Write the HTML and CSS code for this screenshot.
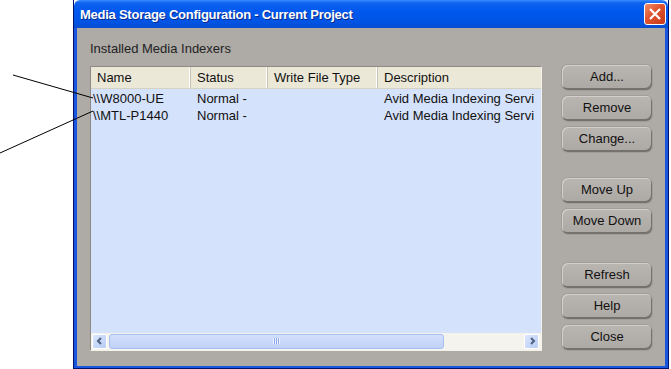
FILE: index.html
```html
<!DOCTYPE html>
<html lang="en">
<head>
  <meta charset="UTF-8">
  <title>Media Storage Configuration</title>
  <link rel="stylesheet" href="styles.css">
</head>
<body>
  <svg class="callouts" width="100" height="160">
    <line x1="13" y1="75" x2="93" y2="98" />
    <line x1="0" y1="153" x2="93" y2="111" />
  </svg>
  <div class="window">
    <div class="titlebar">
      <span class="title">Media Storage Configuration - Current Project</span>
      <div class="close-btn">
        <svg width="14" height="14" viewBox="0 0 14 14"><path d="M2 2 L12 12 M12 2 L2 12" /></svg>
      </div>
    </div>
    <div class="body">
      <div class="main">
        <div class="label">Installed Media Indexers</div>
        <div class="list">
          <div class="list-head">
            <div class="col c-name">Name</div>
            <div class="col c-status">Status</div>
            <div class="col c-type">Write File Type</div>
            <div class="col c-desc">Description</div>
          </div>
          <div class="list-rows">
            <div class="row">
              <div class="cell c-name">\\W8000-UE</div>
              <div class="cell c-status">Normal -</div>
              <div class="cell c-type"></div>
              <div class="cell c-desc">Avid Media Indexing Servi</div>
            </div>
            <div class="row">
              <div class="cell c-name">\\MTL-P1440</div>
              <div class="cell c-status">Normal -</div>
              <div class="cell c-type"></div>
              <div class="cell c-desc">Avid Media Indexing Servi</div>
            </div>
          </div>
          <div class="hscroll">
            <div class="sbtn">
              <svg width="8" height="8" viewBox="0 0 8 8"><path d="M5 1 L2 4 L5 7" /></svg>
            </div>
            <div class="track">
              <div class="thumb"><span class="grip"></span></div>
            </div>
            <div class="sbtn">
              <svg width="8" height="8" viewBox="0 0 8 8"><path d="M3 1 L6 4 L3 7" /></svg>
            </div>
          </div>
        </div>
      </div>
      <div class="buttons">
        <div class="btn">Add...</div>
        <div class="btn">Remove</div>
        <div class="btn">Change...</div>
        <div class="btn gap">Move Up</div>
        <div class="btn">Move Down</div>
        <div class="btn gap2">Refresh</div>
        <div class="btn">Help</div>
        <div class="btn">Close</div>
      </div>
    </div>
  </div>
</body>
</html>
```
FILE: styles.css
```css
html, body {
  margin: 0;
  padding: 0;
  background: #fff;
  font-family: "Liberation Sans", Arial, sans-serif;
  font-size: 13px;
}
body {
  position: relative;
  width: 671px;
  height: 369px;
  overflow: hidden;
}
.callouts {
  position: absolute;
  left: 0;
  top: 0;
  z-index: 2;
}
.callouts line {
  stroke: #000;
  stroke-width: 1;
}
.window {
  margin-left: 73px;
  width: 596px;
  height: 369px;
  box-sizing: border-box;
  border: 1px solid #00136b;
  border-top: none;
  display: flex;
  flex-direction: column;
}
.titlebar {
  height: 28px;
  flex-shrink: 0;
  background: linear-gradient(#3b8bff 0, #0e62f0 3px, #0058ee 40%, #0054e3 80%, #0a4ccf 100%);
  display: flex;
  align-items: center;
  justify-content: space-between;
  padding: 0 2px 0 6px;
  border-radius: 6px 6px 0 0;
}
.title {
  color: #fff;
  font-weight: bold;
  font-size: 13px;
  text-shadow: 1px 1px 0 #0a2a8a;
  letter-spacing: -0.25px;
}
.close-btn {
  width: 20px;
  height: 20px;
  border: 1px solid #fff;
  border-radius: 3px;
  background: linear-gradient(135deg, #f08c6a, #e0532e 45%, #c63a18);
  display: flex;
  align-items: center;
  justify-content: center;
}
.close-btn path {
  stroke: #fff;
  stroke-width: 2.2;
  fill: none;
}
.body {
  flex: 1;
  background: #aeaaa6;
  border-left: 3px solid #1a55e0;
  border-right: 3px solid #1a55e0;
  border-bottom: 2px solid #1a55e0;
  display: flex;
  padding: 14px 0 0 13px;
}
.main {
  width: 452px;
  display: flex;
  flex-direction: column;
}
.label {
  color: #222;
  height: 14px;
  line-height: 14px;
  margin-bottom: 10px;
}
.list {
  height: 285px;
  background: #d5e2fb;
  border: 1px solid #f4f2ea;
  border-left-color: #8d8a86;
  border-top-color: #8d8a86;
  display: flex;
  flex-direction: column;
  box-sizing: border-box;
}
.list-head {
  display: flex;
  height: 21px;
  background: #ebe8d8;
  border-bottom: 1px solid #d6d2c2;
}
.col {
  line-height: 21px;
  padding-left: 6px;
  box-sizing: border-box;
  border-right: 1px solid #c7c4b4;
  box-shadow: inset -1px 0 0 #fff;
  color: #111;
}
.c-name { width: 100px; }
.c-status { width: 77px; }
.c-type { width: 110px; }
.c-desc { flex: 1; border-right: none; box-shadow: none; white-space: nowrap; }
.list-rows {
  flex: 1;
  padding-top: 1px;
}
.row {
  display: flex;
  height: 17px;
  line-height: 17px;
}
.cell {
  padding-left: 6px;
  box-sizing: border-box;
  color: #111;
  white-space: nowrap;
}
.cell.c-name { padding-left: 2px; }
.hscroll {
  height: 16px;
  display: flex;
  align-items: center;
  background: #f4f3ee;
  padding: 0 2px 1px 1px;
  gap: 2px;
}
.sbtn {
  width: 15px;
  height: 15px;
  box-sizing: border-box;
  border: 1px solid #fff;
  border-radius: 2px;
  background: linear-gradient(135deg, #dbe6fc, #b9ccf5);
  display: flex;
  align-items: center;
  justify-content: center;
}
.sbtn path {
  stroke: #4d6185;
  stroke-width: 2;
  fill: none;
}
.track {
  flex: 1;
  height: 15px;
  display: flex;
}
.thumb {
  width: 335px;
  box-sizing: border-box;
  border: 1px solid #a8bff0;
  border-radius: 3px;
  background: linear-gradient(#d3dffb, #c0d2f8);
  display: flex;
  align-items: center;
  justify-content: center;
}
.grip {
  width: 7px;
  height: 6px;
  background: repeating-linear-gradient(90deg, #eef3ff 0 1px, #8aa6e6 1px 2px);
}
.buttons {
  margin-left: 20px;
  padding-top: 23px;
  display: flex;
  flex-direction: column;
}
.btn {
  width: 90px;
  height: 25px;
  margin-bottom: 6px;
  box-sizing: border-box;
  border-radius: 6px;
  background: linear-gradient(#b9b5b1, #aca8a4);
  box-shadow: inset -1px -2px 0 #75716d, inset 1px 1px 0 #d2cfcb, 0 0 0 1px #a19d99;
  text-align: center;
  line-height: 23px;
  color: #111;
}
.btn.gap { margin-top: 20px; }
.btn.gap2 { margin-top: 23px; }
```
